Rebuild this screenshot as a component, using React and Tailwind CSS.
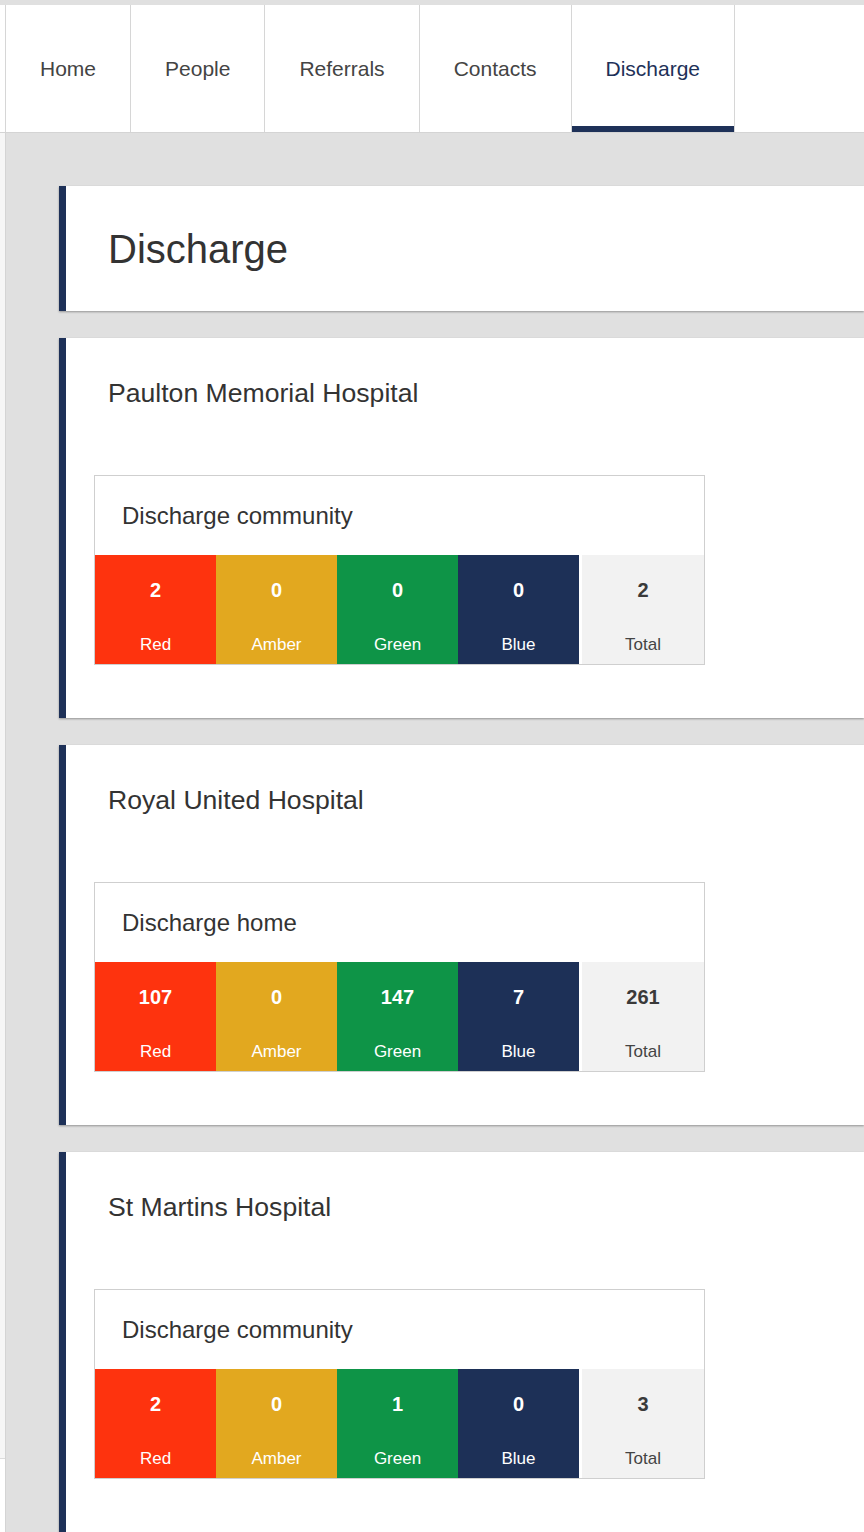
import React from "react";

const tabs = ["Home", "People", "Referrals", "Contacts", "Discharge"];

const hospitals = [
  { name: "Paulton Memorial Hospital", label: "Discharge community", counts: [2, 0, 0, 0], total: 2 },
  { name: "Royal United Hospital", label: "Discharge home", counts: [107, 0, 147, 7], total: 261 },
  { name: "St Martins Hospital", label: "Discharge community", counts: [2, 0, 1, 0], total: 3 },
];

const cells = [
  { name: "Red", bg: "bg-[#fe330e]" },
  { name: "Amber", bg: "bg-[#e2a81f]" },
  { name: "Green", bg: "bg-[#0e9447]" },
  { name: "Blue", bg: "bg-[#1d3057]" },
];

function StatusBox({ label, counts, total }) {
  return (
    <div className="w-[611px] border border-[#cfcfcf] bg-white">
      <div className="h-[79px] flex items-center pl-[27px] text-[24px] text-[#333]">{label}</div>
      <div className="flex h-[109px]">
        {cells.map((c, i) => (
          <div key={c.name} className={`${c.bg} w-[121px] flex flex-col items-center pt-[23px] text-white`}>
            <span className="text-[20px] leading-[24px] font-bold">{counts[i]}</span>
            <span className="text-[17px] leading-[20px] mt-[33px]">{c.name}</span>
          </div>
        ))}
        <div className="w-[3px] bg-white" />
        <div className="flex-1 bg-[#f2f2f2] flex flex-col items-center pt-[23px]">
          <span className="text-[20px] leading-[24px] font-bold text-[#3a3a3a]">{total}</span>
          <span className="text-[17px] leading-[20px] mt-[33px] text-[#444]">Total</span>
        </div>
      </div>
    </div>
  );
}

export default function App() {
  return (
    <div className="min-h-[1532px] bg-white font-['Liberation_Sans',Arial,sans-serif] overflow-hidden">
      <div className="h-[5px] bg-[#e0e0e0]" />

      {/* NAV */}
      <nav className="flex pl-[5px] border-b border-[#d4d4d4]">
        {tabs.map((t) => {
          const active = t === "Discharge";
          return (
            <div
              key={t}
              className={`relative h-[127px] px-[34px] flex items-center text-[21px] border-l border-[#d6d6d6] ${
                active ? "text-[#1e3158] border-r" : "text-[#444]"
              }`}
            >
              {t}
              {active && <div className="absolute left-0 right-0 bottom-0 h-[6px] bg-[#1e3158]" />}
            </div>
          );
        })}
      </nav>

      <div className="flex">
        <div className="w-[5px] shrink-0">
          <div className="h-[1326px] bg-[#f6f6f6] border-b border-[#dcdcdc]" />
        </div>

        {/* MAIN */}
        <main className="flex-1 min-h-[1399px] bg-[#e0e0e0] border-l border-[#d4d4d4] pt-[53px] pl-[53px] flex flex-col gap-[27px]">
          <div className="h-[125px] bg-white border-l-[7px] border-[#1e3158] shadow-[0_1px_2px_rgba(0,0,0,0.35)] flex items-center pl-[42px]">
            <h1 className="text-[40px] text-[#333]">Discharge</h1>
          </div>

          {hospitals.map((h) => (
            <div
              key={h.name}
              className="bg-white border-l-[7px] border-[#1e3158] shadow-[0_1px_2px_rgba(0,0,0,0.35)] pt-[40px] pb-[53px] pl-[28px]"
            >
              <h2 className="pl-[14px] text-[26.6px] leading-[30px] text-[#333]">{h.name}</h2>
              <div className="mt-[67px]">
                <StatusBox label={h.label} counts={h.counts} total={h.total} />
              </div>
            </div>
          ))}
        </main>
      </div>
    </div>
  );
}
